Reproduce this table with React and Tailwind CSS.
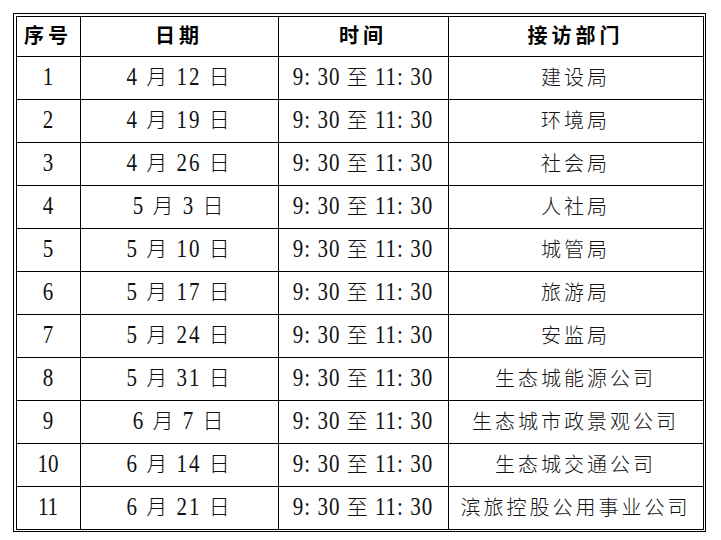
const rows = [
  ['1', '4 月 12 日', '建设局'],
  ['2', '4 月 19 日', '环境局'],
  ['3', '4 月 26 日', '社会局'],
  ['4', '5 月 3 日', '人社局'],
  ['5', '5 月 10 日', '城管局'],
  ['6', '5 月 17 日', '旅游局'],
  ['7', '5 月 24 日', '安监局'],
  ['8', '5 月 31 日', '生态城能源公司'],
  ['9', '6 月 7 日', '生态城市政景观公司'],
  ['10', '6 月 14 日', '生态城交通公司'],
  ['11', '6 月 21 日', '滨旅控股公用事业公司'],
];

const cell = 'border border-black text-center align-middle p-0';

// digits in the original are tall and narrow
function Num({ text }) {
  return text.split(/([0-9:]+)/).map((part, i) =>
    /[0-9:]/.test(part) ? (
      <span key={i} className="inline-block scale-y-[1.2]">{part}</span>
    ) : (
      <span key={i}>{part}</span>
    )
  );
}

export default function App() {
  return (
    <div
      className="w-[721px] h-[540px] bg-white pt-[13px] pl-[13px] text-black"
      style={{ fontFamily: '"Liberation Serif", "Noto Sans CJK SC", serif' }}
    >
      <div className="inline-block border-[1.5px] border-black p-[1.5px]">
        <table className="table-fixed border-collapse w-[687px]">
          <colgroup>
            <col className="w-[64px]" />
            <col className="w-[198px]" />
            <col className="w-[170px]" />
            <col className="w-[255px]" />
          </colgroup>
          <thead>
            <tr className="h-[40px] text-[20px] font-semibold tracking-[4px]">
              <th className={cell}>序号</th>
              <th className={cell}>日期</th>
              <th className={cell}>时间</th>
              <th className={cell}>接访部门</th>
            </tr>
          </thead>
          <tbody className="font-light text-[#111]">
            {rows.map((r) => (
              <tr key={r[0]} className="h-[43px] text-[21px]">
                <td className={cell}><Num text={r[0]} /></td>
                <td className={cell + ' tracking-[2px]'}><Num text={r[1]} /></td>
                <td className={cell + ' tracking-[1px]'}><Num text="9: 30 至 11: 30" /></td>
                <td className={cell + ' text-[20px] tracking-[3px]'}>{r[2]}</td>
              </tr>
            ))}
          </tbody>
        </table>
      </div>
    </div>
  );
}
